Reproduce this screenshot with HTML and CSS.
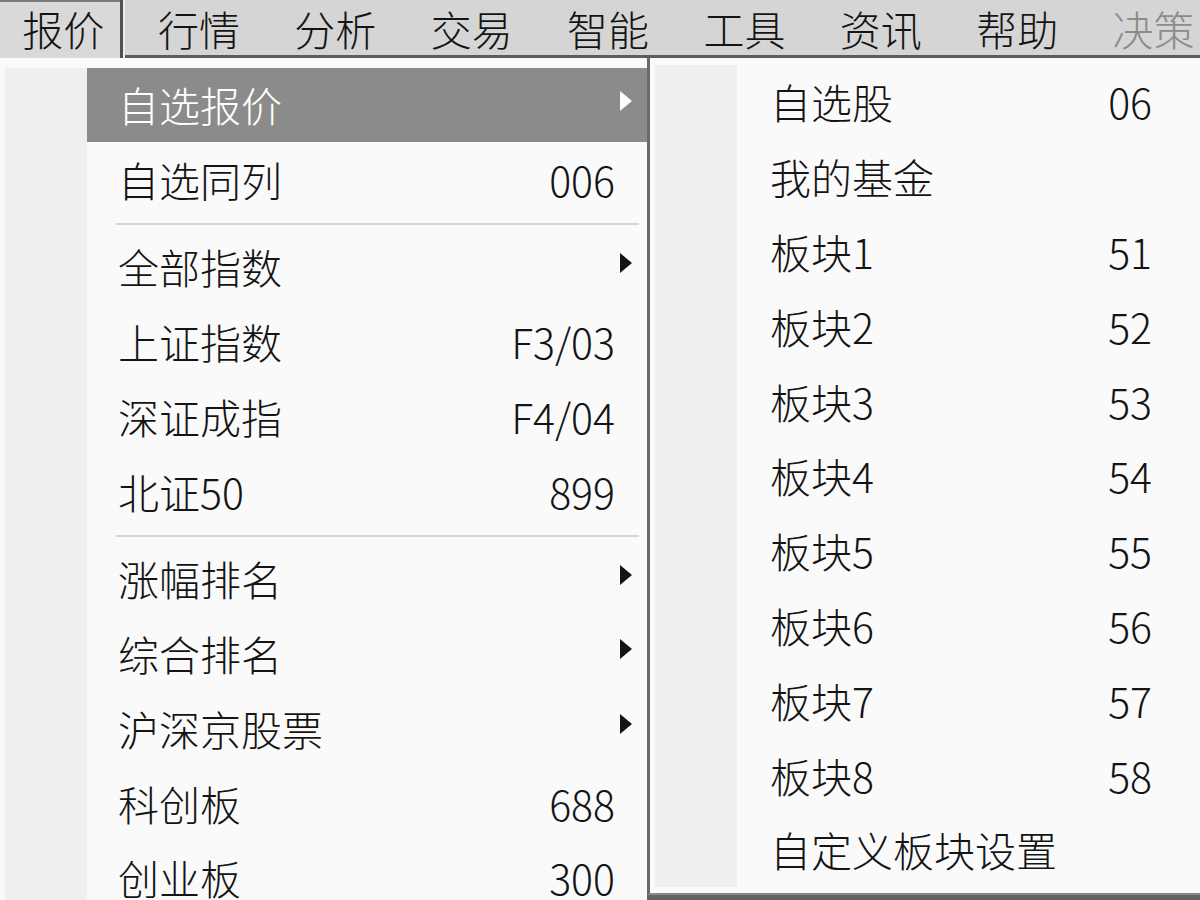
FILE: index.html
```html
<!DOCTYPE html>
<html lang="zh-CN">
<head>
  <meta charset="UTF-8">
  <title>报价菜单</title>
  <link rel="stylesheet" href="styles.css">
</head>
<body>

  <div class="menubar">
    <span class="menubar-item active">报价</span>
    <span class="menubar-item">行情</span>
    <span class="menubar-item">分析</span>
    <span class="menubar-item">交易</span>
    <span class="menubar-item">智能</span>
    <span class="menubar-item">工具</span>
    <span class="menubar-item">资讯</span>
    <span class="menubar-item">帮助</span>
    <span class="menubar-item disabled">决策</span>
  </div>

  <div class="workspace">

    <!-- 报价 下拉菜单 -->
    <div class="menu menu-main">
      <div class="menu-gutter"></div>
      <ul class="menu-list">
        <li class="menu-row selected"><span class="label">自选报价</span><span class="key"></span><span class="arrow"></span></li>
        <li class="menu-row"><span class="label">自选同列</span><span class="key">006</span><span></span></li>
        <li class="menu-sep"></li>
        <li class="menu-row"><span class="label">全部指数</span><span class="key"></span><span class="arrow"></span></li>
        <li class="menu-row"><span class="label">上证指数</span><span class="key">F3/03</span><span></span></li>
        <li class="menu-row"><span class="label">深证成指</span><span class="key">F4/04</span><span></span></li>
        <li class="menu-row"><span class="label">北证50</span><span class="key">899</span><span></span></li>
        <li class="menu-sep"></li>
        <li class="menu-row"><span class="label">涨幅排名</span><span class="key"></span><span class="arrow"></span></li>
        <li class="menu-row"><span class="label">综合排名</span><span class="key"></span><span class="arrow"></span></li>
        <li class="menu-row"><span class="label">沪深京股票</span><span class="key"></span><span class="arrow"></span></li>
        <li class="menu-row"><span class="label">科创板</span><span class="key">688</span><span></span></li>
        <li class="menu-row"><span class="label">创业板</span><span class="key">300</span><span></span></li>
      </ul>
    </div>

    <!-- 自选报价 子菜单 -->
    <div class="menu menu-sub">
      <div class="menu-gutter"></div>
      <ul class="menu-list">
        <li class="menu-row"><span class="label">自选股</span><span class="key">06</span><span></span></li>
        <li class="menu-row"><span class="label">我的基金</span><span class="key"></span><span></span></li>
        <li class="menu-row"><span class="label">板块1</span><span class="key">51</span><span></span></li>
        <li class="menu-row"><span class="label">板块2</span><span class="key">52</span><span></span></li>
        <li class="menu-row"><span class="label">板块3</span><span class="key">53</span><span></span></li>
        <li class="menu-row"><span class="label">板块4</span><span class="key">54</span><span></span></li>
        <li class="menu-row"><span class="label">板块5</span><span class="key">55</span><span></span></li>
        <li class="menu-row"><span class="label">板块6</span><span class="key">56</span><span></span></li>
        <li class="menu-row"><span class="label">板块7</span><span class="key">57</span><span></span></li>
        <li class="menu-row"><span class="label">板块8</span><span class="key">58</span><span></span></li>
        <li class="menu-row"><span class="label">自定义板块设置</span><span class="key"></span><span></span></li>
      </ul>
    </div>

  </div>

</body>
</html>
```

FILE: styles.css
```css
html, body {
  margin: 0;
  width: 1200px;
  height: 900px;
  overflow: hidden;
}

body {
  font-family: "Noto Sans CJK SC", "Noto Sans", sans-serif;
  font-weight: 300;
  color: #141414;
  background-color: #646464;
}

/* 顶部菜单栏 */
.menubar {
  display: flex;
  height: 55px;
  background-color: #d5d5d5;
  border-bottom: 3px solid #5c5c5c;
  white-space: nowrap;
}

.menubar-item {
  padding: 2px 27.2px 0;
  font-size: 41px;
  line-height: 53px;
}

.menubar-item:first-child {
  margin-left: -5px;
}

.menubar-item.active {
  padding-right: 15.8px;
  margin-right: 7.8px;
  margin-bottom: -3px;
  padding-bottom: 3px;
  background-color: #d9d9d9;
  border-right: 3px solid #505050;
  box-shadow: inset 0 2px 0 #7a7a7a, 2px 0 0 #ececec;
}

.menubar-item.disabled {
  color: #8c8c8c;
}

/* 下拉区域 */
.workspace {
  position: relative;
  height: 842px;
  overflow: hidden;
}

.menu {
  position: absolute;
  display: flex;
  background-color: #fafafa;
}

.menu-gutter {
  width: 82px;
  flex-shrink: 0;
  background-color: #efefef;
}

.menu-list {
  list-style: none;
  margin: 0;
  padding: 0;
}

.menu-row {
  display: grid;
  grid-template-columns: 1fr auto 32px;
  align-items: center;
  height: 74.8px;
  padding-left: 31px;
  font-size: 41px;
  line-height: 1;
  white-space: nowrap;
}

.menu-row .key {
  text-align: right;
}

.menu-row.selected {
  background-color: #8b8b8b;
  color: #fff;
}

.arrow {
  width: 0;
  height: 0;
  margin-left: 5px;
  border-top: 10px solid transparent;
  border-bottom: 10px solid transparent;
  border-left: 12px solid #141414;
  transform: translateY(-4px);
}

.selected .arrow {
  border-left-color: #fff;
}

.menu-sep {
  height: 2px;
  margin: 6px 8px 4.5px 29px;
  background-color: #d6d6d6;
}

/* 主菜单 */
.menu-main {
  left: 0;
  top: 0;
  width: 647px;
  height: 842px;
  padding: 9.5px 0 0 5px;
  box-sizing: border-box;
  overflow: hidden;
}

.menu-main .menu-list {
  width: 560px;
}

/* 子菜单 */
.menu-sub {
  left: 647px;
  top: -3px;
  padding: 6.6px 0 6px 5px;
  border-top: 3px solid #5c5c5c;
  border-left: 3px solid #6a6a6a;
  border-bottom: 2px solid #8a8a8a;
}

.menu-sub .menu-row {
  grid-template-columns: 1fr auto 65px;
  padding-left: 33px;
}

.menu-sub .menu-list {
  width: 480px;
}
```
